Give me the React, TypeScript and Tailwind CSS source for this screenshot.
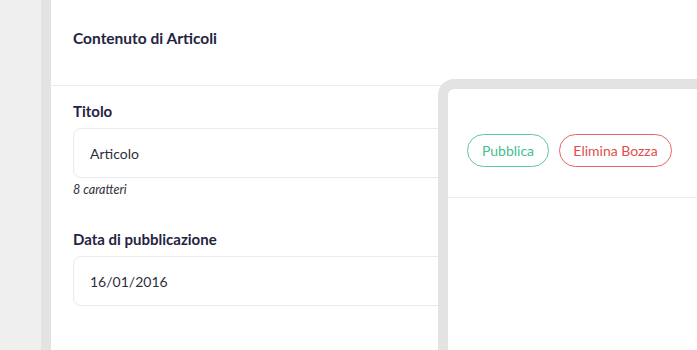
import React from 'react';

const font = { fontFamily: 'Lato, "Open Sans", sans-serif' };

const Field: React.FC<{ label: string; value: string; hint?: string }> = ({ label, value, hint }) => (
  <div>
    <label className="block text-[15px] leading-5 font-bold text-[#25243f] mb-[7px]">{label}</label>
    <div className="h-[50px] w-[560px] rounded-[8px] border border-[#e6eaf4] flex items-center pl-[16px] text-[14px] text-[#2f2f3a]">
      {value}
    </div>
    {hint && <p className="mt-[4px] text-[12.5px] leading-4 italic text-[#2f2f3a]">{hint}</p>}
  </div>
);

const App: React.FC = () => {
  return (
    <div className="flex h-[350px] w-[697px] overflow-hidden bg-[#efefef]" style={font}>
      {/* Sidebar edge */}
      <div className="w-[41px] shrink-0" />
      <div className="w-[10px] shrink-0 bg-[#e3e3e3]" />

      {/* Main card */}
      <div className="relative flex-1 bg-white overflow-hidden">
        <div className="h-[86px] border-b border-[#e5eef4] px-[22px] pt-[28px]">
          <h2 className="text-[15.5px] leading-5 font-bold text-[#25243f]">Contenuto di Articoli</h2>
        </div>
        <div className="px-[22px] pt-[15px] flex flex-col gap-[31px]">
          <Field label="Titolo" value="Articolo" hint="8 caratteri" />
          <Field label="Data di pubblicazione" value="16/01/2016" />
        </div>

        {/* Overlay panel */}
        <div className="absolute left-[387px] top-[79px] w-[320px] h-[300px] bg-white border-l-[10px] border-t-[10px] border-[#e3e3e3] rounded-tl-[16px]">
          <div className="flex gap-[10px] pl-[19px] pt-[45px] pb-[30px] border-b border-[#e3eff5]">
            <button className="h-[33px] w-[82px] rounded-full border border-[#5cc79e] text-[14px] text-[#45bd8f]">
              Pubblica
            </button>
            <button className="h-[33px] w-[113px] rounded-full border border-[#e86464] text-[14px] text-[#e34d4d]">
              Elimina Bozza
            </button>
          </div>
        </div>
      </div>
    </div>
  );
};

export default App;
